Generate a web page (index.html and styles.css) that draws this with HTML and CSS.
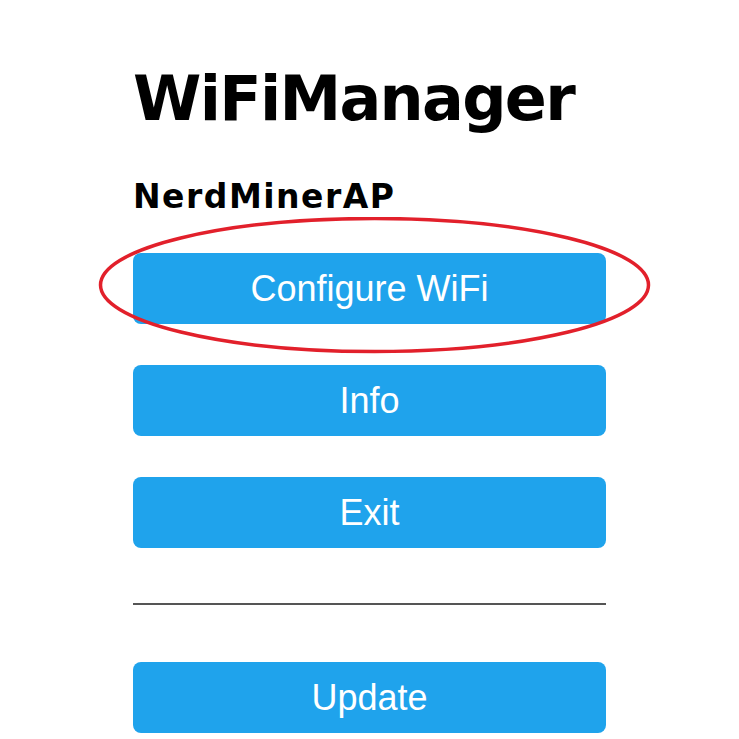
FILE: index.html
```html
<!DOCTYPE html>
<html lang="en">
<head>
  <meta charset="UTF-8">
  <meta name="viewport" content="width=device-width, initial-scale=1.0">
  <title>WiFiManager</title>
  <link rel="stylesheet" href="styles.css">
</head>
<body>
  <div class="wrap">
    <h1>WiFiManager</h1>
    <h3>NerdMinerAP</h3>

    <div class="menu">
      <div class="highlight">
        <button class="btn">Configure WiFi</button>
        <svg class="ring" width="560" height="140" viewBox="0 0 560 140" aria-hidden="true">
          <ellipse cx="281.5" cy="68" rx="274" ry="66.5" fill="none" stroke="#e2202b" stroke-width="3.5"/>
        </svg>
      </div>
      <button class="btn">Info</button>
      <button class="btn">Exit</button>
    </div>

    <hr class="divider">

    <button class="btn">Update</button>
  </div>
</body>
</html>
```

FILE: styles.css
```css
* {
  margin: 0;
  padding: 0;
  box-sizing: border-box;
}

body {
  background: #fff;
  color: #000;
  font-family: 'DejaVu Sans', Verdana, sans-serif;
}

.wrap {
  width: 473px;
  margin-left: 133px;
  padding-top: 64px;
}

h1 {
  font-size: 62px;
  font-weight: 700;
  line-height: 70px;
  letter-spacing: -1.7px;
}

h3 {
  margin-top: 44px;
  font-size: 33px;
  font-weight: 700;
  line-height: 38px;
  letter-spacing: 1.5px;
}

.menu {
  display: flex;
  flex-direction: column;
  gap: 41px;
  margin-top: 37px;
}

.highlight {
  position: relative;
}

.ring {
  position: absolute;
  left: -40px;
  top: -36px;
  pointer-events: none;
}

.btn {
  display: block;
  width: 100%;
  height: 71px;
  border: none;
  border-radius: 8px;
  background: #1fa3ec;
  color: #fff;
  font-family: 'Liberation Sans', Arial, sans-serif;
  font-size: 36px;
  line-height: 71px;
}

.divider {
  border: none;
  border-top: 2px solid #555;
  margin: 55px 0 57px;
}
```
